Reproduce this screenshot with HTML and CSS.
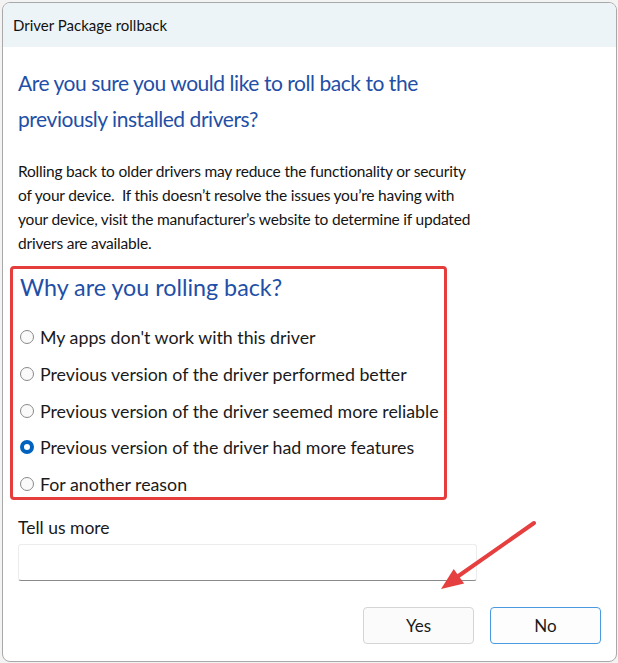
FILE: index.html
```html
<!DOCTYPE html>
<html>
<head>
<meta charset="utf-8">
<link rel="stylesheet" href="styles.css">
</head>
<body>
<div class="window">
  <div class="titlebar">Driver Package rollback</div>
  <div class="content">
    <h1 class="main">Are you sure you would like to roll back to the previously installed drivers?</h1>
    <p class="desc">Rolling back to older drivers may reduce the functionality or security of your device.&nbsp; If this doesn’t resolve the issues you’re having with your device, visit the manufacturer’s website to determine if updated drivers are available.</p>
    <div class="reasons">
      <h2 class="sub">Why are you rolling back?</h2>
      <ul class="options">
        <li><span class="radio"></span>My apps don't work with this driver</li>
        <li><span class="radio"></span>Previous version of the driver performed better</li>
        <li><span class="radio"></span>Previous version of the driver seemed more reliable</li>
        <li><span class="radio checked"></span>Previous version of the driver had more features</li>
        <li><span class="radio"></span>For another reason</li>
      </ul>
    </div>
    <div class="more">
      <div class="label">Tell us more</div>
      <div class="input"></div>
    </div>
    <div class="buttons">
      <div class="btn">Yes</div>
      <div class="btn default">No</div>
    </div>
  </div>
  <svg class="arrow" width="120" height="90" viewBox="0 0 120 90">
    <line x1="113" y1="14" x2="36" y2="68" stroke="#e53f3f" stroke-width="4" stroke-linecap="round"/>
    <polygon points="20,80 32.7,60 43.1,74.6" fill="#e53f3f"/>
  </svg>
</div>
</body>
</html>
```

FILE: styles.css
```css
html, body {
  margin: 0;
  padding: 0;
}
body {
  width: 618px;
  height: 663px;
  background: #f3f3f3;
  font-family: "Segoe UI", "Lato", "Noto Sans", sans-serif;
  color: #1a1a1a;
  overflow: hidden;
}
.window {
  position: relative;
  box-sizing: border-box;
  margin: 2px 1px 0 2px;
  width: 615px;
  height: 660px;
  background: #ffffff;
  border: 1px solid #a9a9a9;
  border-radius: 8px;
  overflow: hidden;
  display: flex;
  flex-direction: column;
}
.titlebar {
  height: 44px;
  background: #edf4f7;
  padding-left: 10px;
  font-size: 15px;
  line-height: 44px;
  color: #111;
  flex: none;
}
.content {
  padding: 0 0 0 15px;
  display: flex;
  flex-direction: column;
}
.main {
  margin: 18px 0 0 0;
  font-weight: normal;
  font-size: 21px;
  letter-spacing: -0.45px;
  line-height: 36px;
  color: #1f4fa6;
  width: 480px;
}
.desc {
  margin: 22px 0 0 0;
  font-size: 15.5px;
  letter-spacing: -0.2px;
  line-height: 24px;
  width: 462px;
  color: #141414;
}
.reasons {
  margin: 11px 0 0 -8px;
  width: 424px;
  height: 228px;
  border: 3px solid #e53c3c;
  border-radius: 4px;
  padding: 0 0 0 7px;
}
.sub {
  margin: 2px 0 0 0;
  font-weight: normal;
  font-size: 23.3px;
  line-height: 32px;
  color: #1f4fa6;
}
.options {
  list-style: none;
  margin: 16px 0 0 0;
  padding: 0;
  display: flex;
  flex-direction: column;
}
.options li {
  display: flex;
  align-items: center;
  height: 36.7px;
  font-size: 17.8px;
  gap: 6px;
}
.radio {
  box-sizing: border-box;
  width: 14px;
  height: 14px;
  border: 1px solid #8a8a8a;
  border-radius: 50%;
  background: #fafafa;
  flex: none;
}
.radio.checked {
  border: 4px solid #0062bf;
  background: #fff;
}
.more {
  margin-top: 17px;
}
.label {
  font-size: 17.5px;
  line-height: 22px;
}
.input {
  box-sizing: border-box;
  margin-top: 5px;
  width: 459px;
  height: 37px;
  border: 1px solid #ececec;
  border-bottom: 1px solid #8a8a8a;
  border-radius: 3px;
}
.buttons {
  margin-top: 26px;
  display: flex;
  gap: 16px;
  padding-left: 345px;
}
.btn {
  box-sizing: border-box;
  width: 111px;
  height: 37px;
  border: 1px solid #d5d5d5;
  border-radius: 4px;
  background: #fbfbfb;
  font-size: 17px;
  display: flex;
  align-items: center;
  justify-content: center;
}
.btn.default {
  border: 1px solid #4a9ae0;
  background: #fdfdfd;
}
.arrow {
  position: absolute;
  left: 418px;
  top: 506px;
}
```
